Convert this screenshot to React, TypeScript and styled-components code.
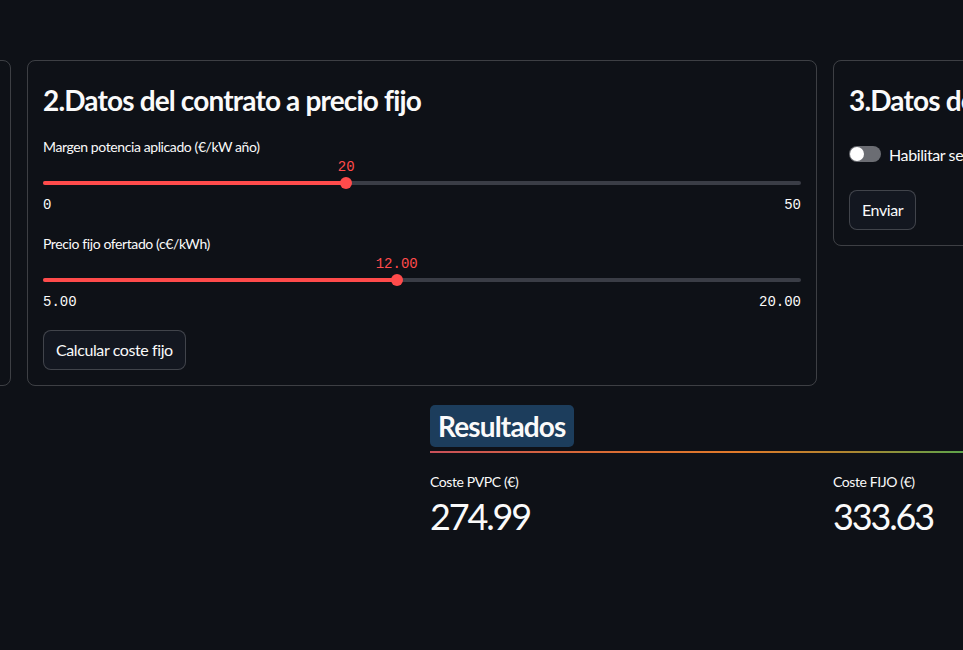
import React from "react";
import styled, { createGlobalStyle } from "styled-components";

const Global = createGlobalStyle`
  html, body {
    margin: 0;
    padding: 0;
    background: #0e1117;
    overflow: hidden;
  }
  body {
    font-family: "Lato", "Noto Sans", sans-serif;
    letter-spacing: -0.025em;
    color: #fafafa;
  }
  * { box-sizing: border-box; }
`;

const Page = styled.main`
  width: 100vw;
  height: 100vh;
  overflow: hidden;
  padding-top: 60px;
`;

const CardRow = styled.div`
  display: flex;
  align-items: flex-start;
  gap: 16px;
  width: max-content;
  margin-left: -779px;
`;

const Card = styled.section`
  flex: 0 0 790px;
  border: 1px solid rgba(250, 250, 250, 0.2);
  border-radius: 8px;
  padding: 15px;
  display: flex;
  flex-direction: column;
  align-items: flex-start;
  gap: 18px;
`;

const Title = styled.h3`
  margin: 0;
  padding-top: 7px;
  font-size: 28px;
  line-height: 35px;
  font-weight: 700;
  letter-spacing: -0.03em;
  white-space: nowrap;
  color: #fafafa;
`;

const SliderBlock = styled.div`
  width: 100%;
  display: flex;
  flex-direction: column;
`;

const Label = styled.label`
  font-size: 14px;
  line-height: 20px;
  padding-top: 1px;
  color: #fafafa;
`;

const TrackArea = styled.div`
  padding: 24px 0 10px;
`;

const Track = styled.div`
  position: relative;
  height: 4px;
  border-radius: 2px;
  background: #3a3d46;
`;

const Fill = styled.div`
  position: absolute;
  left: 0;
  top: 0;
  bottom: 0;
  border-radius: 2px;
  background: #ff4b4b;
`;

const Thumb = styled.div`
  position: absolute;
  top: -4px;
  width: 12px;
  height: 12px;
  margin-left: -6px;
  border-radius: 50%;
  background: #ff4b4b;
`;

const ThumbValue = styled.div`
  position: absolute;
  top: -23px;
  transform: translateX(-50%);
  font-family: "Liberation Mono", "DejaVu Sans Mono", monospace;
  letter-spacing: 0;
  font-size: 14px;
  line-height: 18px;
  color: #ff4b4b;
  white-space: nowrap;
`;

const Bounds = styled.div`
  display: flex;
  justify-content: space-between;
  padding-top: 1px;
  font-family: "Liberation Mono", "DejaVu Sans Mono", monospace;
  letter-spacing: 0;
  font-size: 14px;
  line-height: 19px;
  color: #fafafa;
`;

const Button = styled.button`
  font-family: inherit;
  letter-spacing: -0.025em;
  font-size: 16px;
  color: #fafafa;
  background: #131720;
  border: 1px solid rgba(250, 250, 250, 0.2);
  border-radius: 8px;
  height: 40px;
  padding: 0 12px;
  line-height: 38px;
  cursor: pointer;
`;

const ToggleRow = styled.div`
  height: 36px;
  display: flex;
  align-items: center;
  gap: 8px;
  font-size: 16px;
  white-space: nowrap;
`;

const ToggleTrack = styled.div`
  position: relative;
  width: 32px;
  height: 16px;
  border-radius: 8px;
  background: #6b6d73;
`;

const ToggleKnob = styled.div`
  position: absolute;
  left: 1px;
  top: 1px;
  width: 14px;
  height: 14px;
  border-radius: 50%;
  background: #ffffff;
`;

const Results = styled.section`
  margin: 19px 0 0 430px;
  display: flex;
  flex-direction: column;
  align-items: flex-start;
`;

const Badge = styled.h2`
  margin: 0;
  height: 42px;
  line-height: 42px;
  padding: 0 8px;
  border-radius: 5px;
  background: #1c3d5c;
  font-size: 28px;
  font-weight: 700;
  letter-spacing: -0.03em;
  color: #fafafa;
`;

const Rainbow = styled.div`
  align-self: stretch;
  margin-top: 4px;
  height: 2px;
  background: linear-gradient(
    to right,
    #c9505a 0%,
    #d86a36 30%,
    #e07a2a 58%,
    #b08530 78%,
    #5da34a 100%
  );
`;

const Metrics = styled.div`
  margin-top: 19px;
  display: grid;
  grid-template-columns: 387px 387px;
  column-gap: 16px;
`;

const Metric = styled.div`
  display: flex;
  flex-direction: column;
  gap: 2px;
`;

const MetricLabel = styled.div`
  font-size: 14px;
  line-height: 20px;
`;

const MetricValue = styled.div`
  font-size: 36px;
  line-height: 44px;
  letter-spacing: -0.06em;
`;

type SliderProps = { label: string; min: number; max: number; value: number; decimals?: number };

function Slider({ label, min, max, value, decimals = 0 }: SliderProps) {
  const pct = ((value - min) / (max - min)) * 100;
  const fmt = (n: number) => n.toFixed(decimals);
  return (
    <SliderBlock>
      <Label>{label}</Label>
      <TrackArea>
        <Track>
          <Fill style={{ width: `${pct}%` }} />
          <Thumb style={{ left: `${pct}%` }} />
          <ThumbValue style={{ left: `${pct}%` }}>{fmt(value)}</ThumbValue>
        </Track>
      </TrackArea>
      <Bounds>
        <span>{fmt(min)}</span>
        <span>{fmt(max)}</span>
      </Bounds>
    </SliderBlock>
  );
}

export default function App() {
  return (
    <>
      <Global />
      <Page>
        <CardRow>
          <Card>
            <Title>1.Datos del consumo</Title>
            <Slider label="Potencia contratada (kW)" min={1} max={15} value={4} />
            <Slider label="Consumo mensual (kWh)" min={0} max={1000} value={250} />
            <Button>Calcular coste PVPC</Button>
          </Card>
          <Card>
            <Title>2.Datos del contrato a precio fijo</Title>
            <Slider label="Margen potencia aplicado (€/kW año)" min={0} max={50} value={20} />
            <Slider label="Precio fijo ofertado (c€/kWh)" min={5} max={20} value={12} decimals={2} />
            <Button>Calcular coste fijo</Button>
          </Card>
          <Card>
            <Title>3.Datos de contacto</Title>
            <ToggleRow>
              <ToggleTrack>
                <ToggleKnob />
              </ToggleTrack>
              Habilitar seguimiento
            </ToggleRow>
            <Button>Enviar</Button>
          </Card>
        </CardRow>
        <Results>
          <Badge>Resultados</Badge>
          <Rainbow />
          <Metrics>
            <Metric>
              <MetricLabel>Coste PVPC (€)</MetricLabel>
              <MetricValue>274.99</MetricValue>
            </Metric>
            <Metric>
              <MetricLabel>Coste FIJO (€)</MetricLabel>
              <MetricValue>333.63</MetricValue>
            </Metric>
          </Metrics>
        </Results>
      </Page>
    </>
  );
}
